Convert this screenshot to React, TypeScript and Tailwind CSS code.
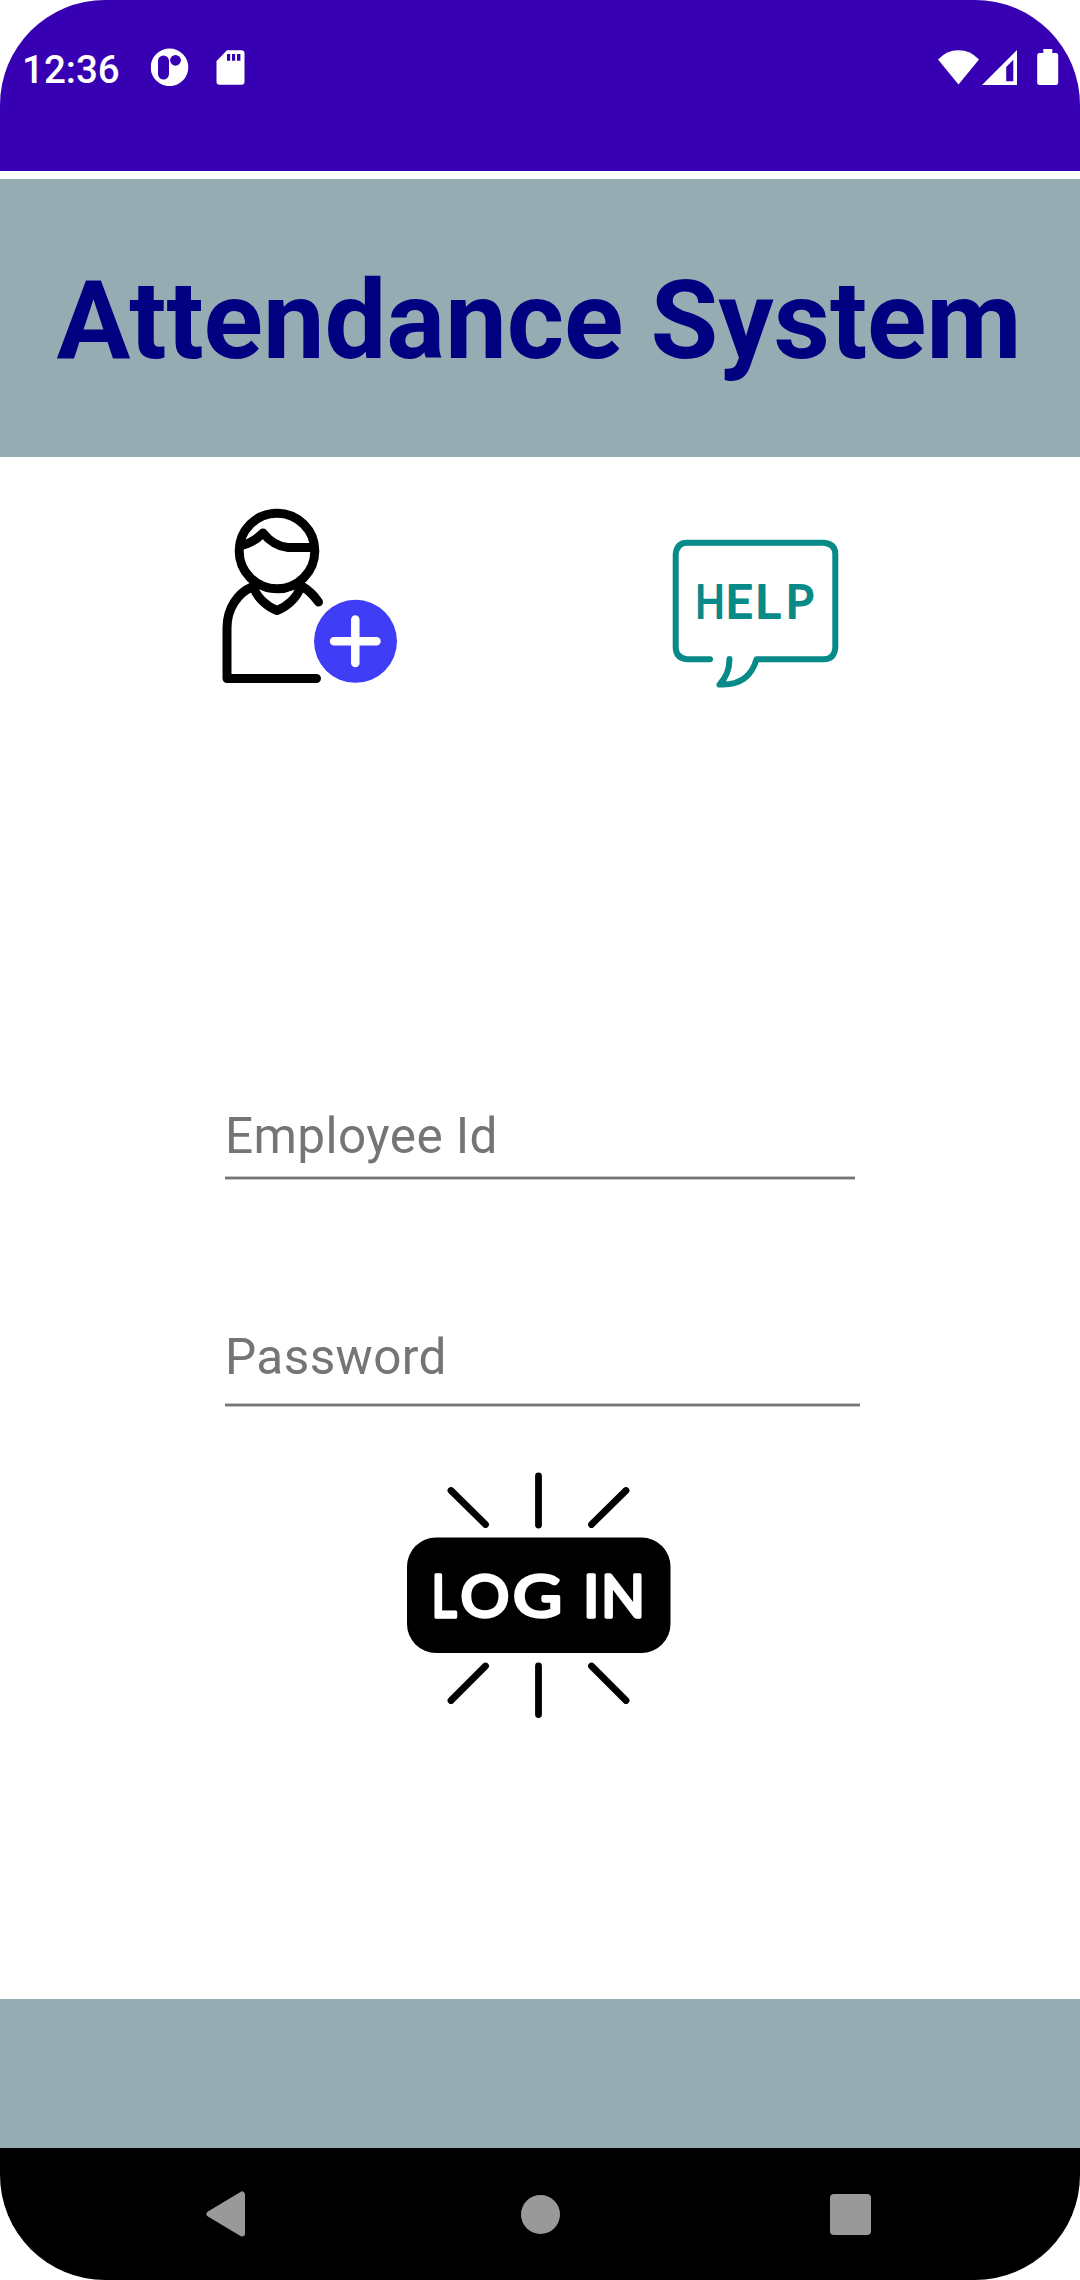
import React from "react";

function StatusBar() {
  return (
    <div className="flex h-[171px] items-start justify-between bg-[#3700b3] pl-[22px] pr-[21px] text-white">
      <div className="flex items-start">
        <span className="mt-[47px] w-[129px] whitespace-nowrap text-[38.5px] font-medium leading-[45px]">12:36</span>
        <svg className="mt-[48px]" width="38" height="38" viewBox="0 0 38 38">
          <circle cx="18.5" cy="19.3" r="18.8" fill="#fff" />
          <rect x="7" y="7.5" width="11" height="24" rx="5.5" fill="#3700b3" />
          <circle cx="24.5" cy="12.3" r="5.4" fill="#3700b3" />
        </svg>
        <svg className="ml-[27px] mt-[50px]" width="29" height="35" viewBox="0 0 29 35">
          <path d="M11 .3H25.5Q28.5 .3 28.5 3.3V31.7Q28.5 34.7 25.5 34.7H3.5Q.5 34.7 .5 31.7V11Z" fill="#fff" />
          <path d="M11 4h3.2v6.8H11zM16 4h3.2v6.8H16zM21 4h3.4v6.8H21z" fill="#3700b3" />
        </svg>
      </div>
      <div className="mt-[48px] flex items-start">
        <svg width="42" height="38" viewBox="0 0 42 38">
          <path d="M0 11.5Q8.5 2.2 20.5 2.2T41 11.5L20.5 36.5Z" fill="#fff" />
        </svg>
        <svg className="ml-[2px]" width="36" height="38" viewBox="0 0 36 38">
          <path d="M0 37L35 2V37ZM24.2 33.2H31.3V11.8L24.2 19Z" fill="#fff" fillRule="evenodd" />
        </svg>
        <svg className="ml-[19px]" width="22" height="38" viewBox="0 0 22 38">
          <path d="M6.3 1h9v4H19q2.200 0 2.200 2.200V34.700q0 2.200-2.200 2.200H2.500Q.2 36.900 .2 34.700V7.200Q.2 5 2.500 5H6.300Z" fill="#fff" />
        </svg>
      </div>
    </div>
  );
}

function AddEmployeeIcon() {
  return (
    <svg width="220" height="210" viewBox="0 0 220 210" fill="none" stroke="#000" strokeWidth="9" strokeLinecap="round" strokeLinejoin="round">
      <circle cx="77" cy="61" r="37.800" />
      <path d="M40 55.500Q52 54 63 43Q74 56.500 88 57.500H114" />
      <path d="M52 97C38 103 27 118 27 138V188.500H116.500" />
      <path d="M54 98C57 108 68 117 77 120.500C86 117 97 108 100 98" />
      <path d="M103 97Q111.500 102 118.500 112" />
      <circle cx="155.500" cy="151.300" r="41.500" fill="#3f3df5" stroke="none" />
      <path d="M155.300 129.500V173M134 151.300H176.500" stroke="#fff" strokeWidth="8.500" />
    </svg>
  );
}

function HelpIcon() {
  return (
    <svg width="210" height="180" viewBox="0 0 210 180" fill="none" stroke="#088a88" strokeWidth="6" strokeLinecap="round" strokeLinejoin="round">
      <path d="M60 139.300H37Q25.700 138 25.700 127V34Q27 22.700 37 22.700H174Q185.300 24 185.300 34V128Q184 139.300 174 139.300H106.500Q99 166 69.500 164.500Q79.500 154 79.500 139" />
      <text y="97.500" fill="#088a88" strokeWidth="2" fontSize="45.500" className="font-['Lato',sans-serif] font-normal">
        <tspan x="45.300" textLength="29.500" lengthAdjust="spacingAndGlyphs">H</tspan>
        <tspan x="75.600" textLength="27.300" lengthAdjust="spacingAndGlyphs">E</tspan>
        <tspan x="105" textLength="25.400" lengthAdjust="spacingAndGlyphs">L</tspan>
        <tspan x="135.800" textLength="28" lengthAdjust="spacingAndGlyphs">P</tspan>
      </text>
    </svg>
  );
}

function LoginIcon() {
  return (
    <svg width="300" height="270" viewBox="0 0 300 270">
      <rect x="17" y="77.500" width="263.500" height="115.500" rx="29" fill="#000" />
      <path
        d="M61 30.500L95.500 64.500M148.500 16V65M236 30.500L201.500 64.500M95.500 206L61 240.500M148.500 206V254.500M201.500 206L236 240.500"
        stroke="#000"
        strokeWidth="6.800"
        strokeLinecap="round"
      />
      <text
        y="156.500"
        fill="#fff"
        stroke="#fff"
        strokeWidth="3.500"
        strokeLinejoin="round"
        fontSize="58.500"
        className="font-['Lato',sans-serif] font-normal"
      >
        <tspan x="41.500" textLength="25" lengthAdjust="spacingAndGlyphs">L</tspan>
        <tspan x="70.500" textLength="48.800" lengthAdjust="spacingAndGlyphs">O</tspan>
        <tspan x="123" textLength="49" lengthAdjust="spacingAndGlyphs">G</tspan>{" "}
        <tspan x="193">I</tspan>
        <tspan x="211" textLength="44" lengthAdjust="spacingAndGlyphs">N</tspan>
      </text>
    </svg>
  );
}

const inputClass =
  "block h-[58px] w-full bg-transparent p-0 text-[49.5px] leading-[58px] tracking-[0.4px] text-[#757575] placeholder:text-[#757575] placeholder:opacity-100 outline-none";

function Underline() {
  return <div className="h-1 border-y border-[#c6c6c6] bg-[#757575]" />;
}

export default function App() {
  return (
    <div className="flex h-[2280px] w-[1080px] flex-col overflow-hidden rounded-[105px] bg-white font-['Roboto',sans-serif]">
      <StatusBar />
      <header className="mt-2 flex h-[278px] justify-center bg-[#95adb2] pr-[2px] pt-[77px]">
        <h1 className="whitespace-nowrap text-[110px] font-bold leading-[129px] tracking-[-0.08px] text-[#000080]">Attendance System</h1>
      </header>
      <main className="flex h-[1542px] flex-col">
        <div className="flex h-[650px] items-start pl-[200px]">
          <button aria-label="Add employee" className="mt-[33px]">
            <AddEmployeeIcon />
          </button>
          <button aria-label="Help" className="ml-[230px] mt-[63px]">
            <HelpIcon />
          </button>
        </div>
        <form className="flex flex-col pl-[225px]">
          <div className="flex h-[221px] w-[630px] flex-col gap-[11px]">
            <input className={inputClass} placeholder="Employee Id" />
            <Underline />
          </div>
          <div className="flex w-[635px] flex-col gap-[17px]">
            <input className={inputClass} type="password" placeholder="Password" />
            <Underline />
          </div>
          <button type="button" className="ml-[165px] mt-[53px] w-[300px]">
            <LoginIcon />
          </button>
        </form>
      </main>
      <div className="h-[149px] bg-[#95adb2]" />
      <nav className="flex h-[132px] items-center bg-black pl-[206px]">
        <svg width="40" height="46" viewBox="0 0 40 46">
          <path d="M3.500 23L36 3.500V42.500Z" fill="#999" stroke="#999" strokeWidth="6" strokeLinejoin="round" />
        </svg>
        <span className="ml-[275px] size-[39px] rounded-full bg-[#999]" />
        <span className="ml-[270px] size-[41px] rounded-[4px] bg-[#999]" />
      </nav>
    </div>
  );
}
